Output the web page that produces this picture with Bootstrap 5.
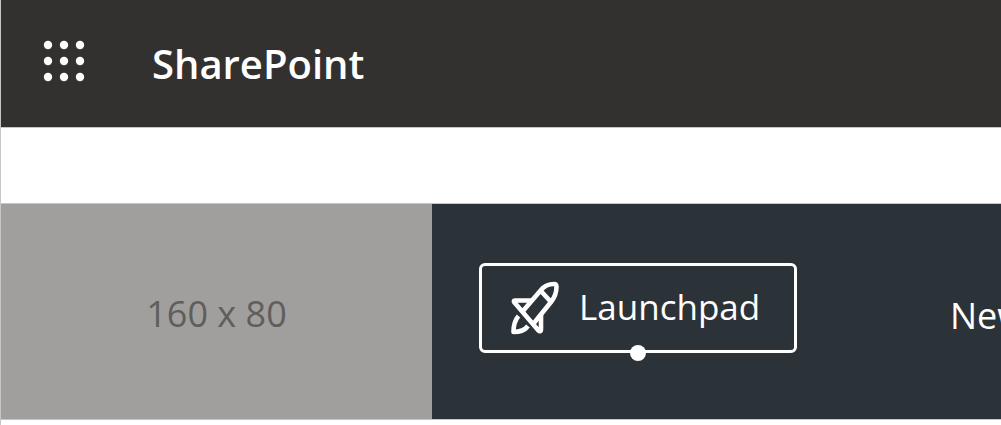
<!DOCTYPE html>
<html lang="en">
<head>
<meta charset="utf-8">
<meta name="viewport" content="width=device-width, initial-scale=1">
<title>SharePoint</title>
<link href="https://cdn.jsdelivr.net/npm/bootstrap@5.3.0/dist/css/bootstrap.min.css" rel="stylesheet">
<style>
  body { font-family: "Open Sans", "Noto Sans", sans-serif; border-left: 1px solid #c8c6c4; background: #fff; min-height: 100vh; }
  .suite-bar { background: #323130; height: 128px; border-bottom: 1px solid #c8c6c4; padding-left: 40px; gap: 63px; }
  .suite-name { font-size: 40px; line-height: 56px; font-weight: 600; }
  .site-band { background: #2b3238; height: 217px; margin-top: 75px; border-top: 1px solid #c8c6c4; border-bottom: 1px solid #c8c6c4; font-size: 36px; line-height: 48px; }
  .site-logo { width: 431px; background: #a19f9d; color: #605e5c; padding-top: 4px; }
  .hub-nav { gap: 153px; padding-left: 47px; }
  .hub-link { color: #fff; }
  .launch-link { width: 318px; height: 90px; font-size: 35px; border: 3px solid #fff; border-radius: 6px; gap: 19px; margin-bottom: 8px; padding-left: 28px; }
  .launch-label { padding-bottom: 2px; }
  .launch-dot { width: 16px; height: 16px; bottom: -11px; }
  .news-link { margin-top: 9px; }
</style>
</head>
<body>
<header class="suite-bar d-flex align-items-center">
  <button type="button" class="btn p-0 border-0 d-flex" aria-label="App launcher">
    <svg width="48" height="48" viewBox="0 0 48 48" fill="#fff" aria-hidden="true">
      <circle cx="7" cy="5" r="4.2"/><circle cx="23" cy="5" r="4.2"/><circle cx="39" cy="5" r="4.2"/>
      <circle cx="7" cy="21" r="4.2"/><circle cx="23" cy="21" r="4.2"/><circle cx="39" cy="21" r="4.2"/>
      <circle cx="7" cy="37" r="4.2"/><circle cx="23" cy="37" r="4.2"/><circle cx="39" cy="37" r="4.2"/>
    </svg>
  </button>
  <a href="#" class="suite-name text-white text-decoration-none">SharePoint</a>
</header>
<main class="site-band d-flex overflow-hidden">
  <div class="site-logo d-flex flex-shrink-0 align-items-center justify-content-center">160 x 80</div>
  <nav class="hub-nav d-flex flex-grow-1 align-items-center text-nowrap overflow-hidden" aria-label="Hub">
    <a href="#" class="hub-link launch-link position-relative d-flex flex-shrink-0 align-items-center text-decoration-none">
      <svg width="50" height="54" viewBox="0 0 50 54" fill="none" stroke="#fff" stroke-width="4.6" stroke-linejoin="round" aria-hidden="true">
        <path d="M13 30 31 9C35 4 40 3 44 3C46 3 46.500 4 46.500 6C46.500 11 45 16 41 21L24 42"/>
        <path d="M30 9 41 21"/>
        <path d="M22 19.500H5Q3 19.500 4.500 21.500L28 49Q31 52 31 48V33"/>
        <path d="M8.500 35C5 39 3.500 44 3.500 51C10 51 15 49 18 45"/>
      </svg>
      <span class="launch-label">Launchpad</span>
      <span class="launch-dot position-absolute start-50 translate-middle-x rounded-circle bg-white"></span>
    </a>
    <a href="#" class="hub-link news-link text-decoration-none">New</a>
  </nav>
</main>
</body>
</html>
